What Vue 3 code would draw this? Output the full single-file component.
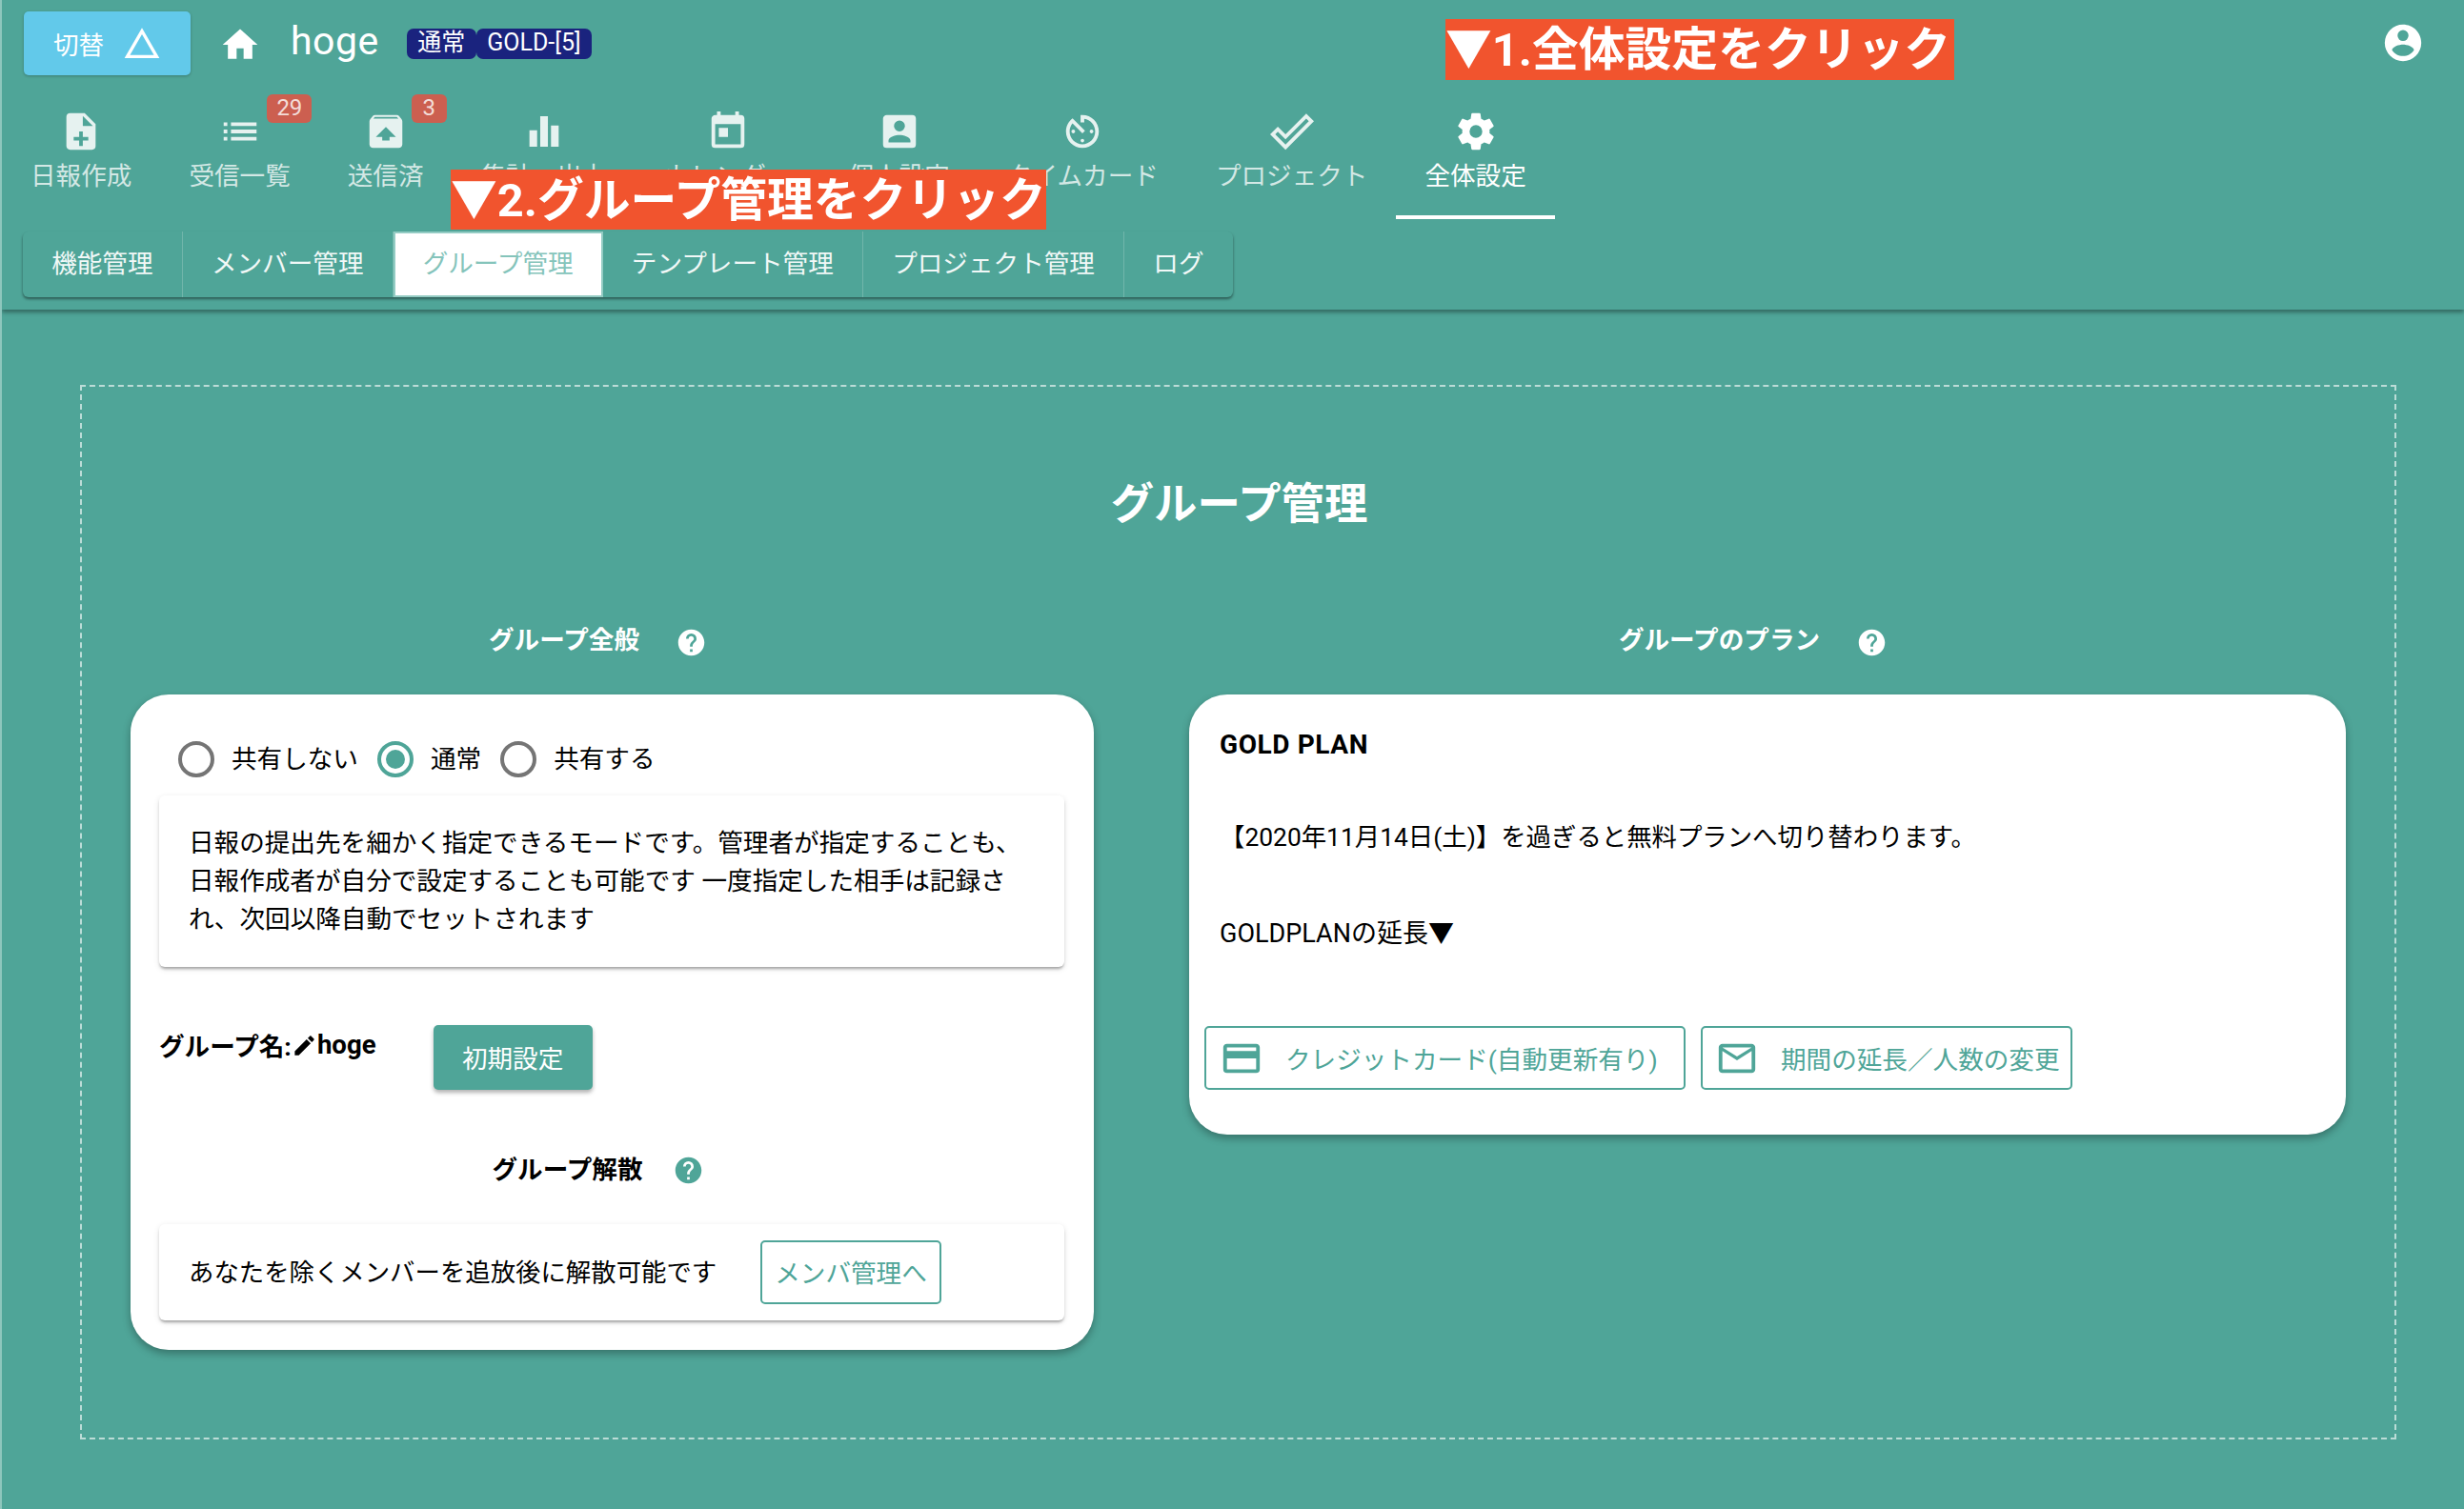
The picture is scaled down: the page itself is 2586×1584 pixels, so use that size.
<template>
  <div class="page">
    <header class="top">
      <div class="brand-row">
        <button class="switch-btn">
          切替
          <svg class="switch-icon" viewBox="0 0 24 24"><path :d="icons.triangle" /></svg>
        </button>
        <svg class="home-icon" viewBox="0 0 24 24"><path :d="icons.home" /></svg>
        <span class="site-name">hoge</span>
        <span class="chip">通常</span>
        <span class="chip">GOLD-[5]</span>
        <svg class="account-icon" viewBox="0 0 24 24"><path :d="icons.account" /></svg>
      </div>

      <nav class="nav">
        <a v-for="item in navItems" :key="item.label" class="nav-item" :class="{ active: item.active }">
          <svg class="nav-icon" viewBox="0 0 24 24"><path :d="item.icon" fill-rule="evenodd" /></svg>
          <span>{{ item.label }}</span>
          <span v-if="item.count" class="count" :class="item.countClass">{{ item.count }}</span>
        </a>
      </nav>

      <div class="subbar">
        <a v-for="tab in subTabs" :key="tab" class="subtab" :class="{ active: tab === 'グループ管理' }">{{ tab }}</a>
      </div>

      <div class="note note-one">▼1.全体設定をクリック</div>
      <div class="note note-two">▼2.グループ管理をクリック</div>
    </header>

    <main class="dashed">
      <h1 class="title">グループ管理</h1>

      <div class="columns">
        <section>
          <div class="heading">
            <span>グループ全般</span>
            <svg class="help" viewBox="0 0 24 24"><path :d="icons.help" /></svg>
          </div>
          <div class="card left-card">
            <div class="radios">
              <label v-for="r in radios" :key="r" class="radio">
                <span class="radio-mark" :class="{ on: r === '通常' }"></span>
                <span class="radio-text">{{ r }}</span>
              </label>
            </div>
            <div class="sheet desc">
              日報の提出先を細かく指定できるモードです。管理者が指定することも、日報作成者が自分で設定することも可能です 一度指定した相手は記録され、次回以降自動でセットされます
            </div>
            <div class="name-row">
              <div class="group-name">
                グループ名:<svg class="pencil" viewBox="0 0 24 24"><path :d="icons.pencil" /></svg><span class="name-value">hoge</span>
              </div>
              <button class="init-btn">初期設定</button>
            </div>
            <div class="heading dark">
              <span>グループ解散</span>
              <svg class="help" viewBox="0 0 24 24"><path :d="icons.help" /></svg>
            </div>
            <div class="sheet dissolve">
              <span class="dissolve-text">あなたを除くメンバーを追放後に解散可能です</span>
              <button class="outline-btn member-btn">メンバ管理へ</button>
            </div>
          </div>
        </section>

        <section>
          <div class="heading">
            <span>グループのプラン</span>
            <svg class="help" viewBox="0 0 24 24"><path :d="icons.help" /></svg>
          </div>
          <div class="card right-card">
            <p class="plan-name">GOLD PLAN</p>
            <p class="plan-limit">【2020年11月14日(土)】を過ぎると無料プランへ切り替わります。</p>
            <p class="plan-extend">GOLDPLANの延長▼</p>
            <div class="plan-buttons">
              <button class="outline-btn plan-btn card-btn">
                <svg class="btn-icon" viewBox="0 0 24 24"><path :d="icons.card" /></svg>
                クレジットカード(自動更新有り)
              </button>
              <button class="outline-btn plan-btn mail-btn">
                <svg class="btn-icon" viewBox="0 0 24 24"><path :d="icons.mail" /></svg>
                期間の延長／人数の変更
              </button>
            </div>
          </div>
        </section>
      </div>
    </main>
  </div>
</template>

<script setup>
const icons = {
  triangle: "M12,2L1,21H23M12,6L19.53,19H4.47",
  home: "M10,20V14H14V20H19V12H22L12,3L2,12H5V20H10Z",
  account:
    "M12,19.2C9.5,19.2 7.29,17.92 6,16C6.03,14 10,12.9 12,12.9C14,12.9 17.97,14 18,16C16.71,17.92 14.5,19.2 12,19.2M12,5A3,3 0 0,1 15,8A3,3 0 0,1 12,11A3,3 0 0,1 9,8A3,3 0 0,1 12,5M12,2A10,10 0 0,0 2,12A10,10 0 0,0 12,22A10,10 0 0,0 22,12C22,6.47 17.5,2 12,2Z",
  help: "M15.07,11.25L14.17,12.17C13.45,12.89 13,13.5 13,15H11V14.5C11,13.39 11.45,12.39 12.17,11.67L13.41,10.41C13.78,10.05 14,9.55 14,9C14,7.89 13.1,7 12,7A2,2 0 0,0 10,9H8A4,4 0 0,1 12,5A4,4 0 0,1 16,9C16,9.88 15.64,10.67 15.07,11.25M13,19H11V17H13M12,2A10,10 0 0,0 2,12A10,10 0 0,0 12,22A10,10 0 0,0 22,12C22,6.47 17.5,2 12,2Z",
  pencil:
    "M20.71,7.04C21.1,6.65 21.1,6 20.71,5.63L18.37,3.29C18,2.9 17.35,2.9 16.96,3.29L15.12,5.12L18.87,8.87M3,17.25V21H6.75L17.81,9.93L14.06,6.18L3,17.25Z",
  card: "M20,8H4V6H20M20,18H4V12H20M20,4H4C2.89,4 2,4.89 2,6V18A2,2 0 0,0 4,20H20A2,2 0 0,0 22,18V6C22,4.89 21.1,4 20,4Z",
  mail: "M22 6C22 4.9 21.1 4 20 4H4C2.9 4 2 4.9 2 6V18C2 19.1 2.9 20 4 20H20C21.1 20 22 19.1 22 18V6M20 6L12 11L4 6H20M20 18H4V8L12 13L20 8V18Z",
};

const navItems = [
  {
    label: "日報作成",
    icon: "M13,9H18.5L13,3.5V9M6,2H14L20,8V20A2,2 0 0,1 18,22H6C4.89,22 4,21.1 4,20V4C4,2.89 4.89,2 6,2M11,15H8V17H11V20H13V17H16V15H13V12H11V15Z",
  },
  {
    label: "受信一覧",
    icon: "M3 13h2v-2H3v2zm0 4h2v-2H3v2zm0-8h2V7H3v2zm4 4h14v-2H7v2zm0 4h14v-2H7v2zM7 7v2h14V7H7z",
    count: 29,
    countClass: "count-wide",
  },
  {
    label: "送信済",
    icon: "M20.55 5.22l-1.39-1.68C18.88 3.21 18.47 3 18 3H6c-.47 0-.88.21-1.15.55L3.46 5.22C3.17 5.57 3 6.01 3 6.5V19c0 1.1.89 2 2 2h14c1.1 0 2-.9 2-2V6.5c0-.49-.17-.93-.45-1.28zM12 9.5l5.5 5.5H14v2h-4v-2H6.5L12 9.5zM5.12 5l.82-1h12l.93 1H5.12z",
    count: 3,
    countClass: "count-narrow",
  },
  { label: "集計・出力", icon: "M4 20.3V11.4h4.2v8.9zM9.9 20.3V3.6h4.2v16.7zM15.8 20.3V8.8H20v11.5z" },
  {
    label: "カレンダー",
    icon: "M7,10H12V15H7M19,19H5V8H19M19,3H18V1H16V3H8V1H6V3H5C3.89,3 3,3.9 3,5V19A2,2 0 0,0 5,21H19A2,2 0 0,0 21,19V5A2,2 0 0,0 19,3Z",
  },
  {
    label: "個人設定",
    icon: "M6,17C6,15 10,14 12,14C14,14 18,15 18,17V18H6M15,9A3,3 0 0,1 12,12A3,3 0 0,1 9,9A3,3 0 0,1 12,6A3,3 0 0,1 15,9M3,5V19A2,2 0 0,0 5,21H19A2,2 0 0,0 21,19V5A2,2 0 0,0 19,3H5C3.89,3 3,3.9 3,5Z",
  },
  {
    label: "タイムカード",
    icon: "M11 17c0 .55.45 1 1 1s1-.45 1-1-.45-1-1-1-1 .45-1 1zm0-14v4h2V5.08c3.39.49 6 3.39 6 6.92 0 3.87-3.13 7-7 7s-7-3.13-7-7c0-1.68.59-3.22 1.58-4.42L12 13l1.41-1.41-6.8-6.8v.02C4.42 6.45 3 9.05 3 12c0 4.97 4.02 9 9 9 4.97 0 9-4.03 9-9s-4.03-9-9-9h-1zm7 9c0-.55-.45-1-1-1s-1 .45-1 1 .45 1 1 1 1-.45 1-1zM6 12c0 .55.45 1 1 1s1-.45 1-1-.45-1-1-1-1 .45-1 1z",
  },
  {
    label: "プロジェクト",
    icon: "M19.78,2.2L24,6.42L8.44,22L0,13.55L4.22,9.33L8.44,13.55L19.78,2.2M19.78,5L8.44,16.36L4.22,12.19L2.81,13.55L8.44,19.17L21.19,6.42L19.78,5Z",
  },
  {
    label: "全体設定",
    active: true,
    icon: "M12,15.5A3.5,3.5 0 0,1 8.5,12A3.5,3.5 0 0,1 12,8.5A3.5,3.5 0 0,1 15.5,12A3.5,3.5 0 0,1 12,15.5M19.43,12.97C19.47,12.65 19.5,12.33 19.5,12C19.5,11.67 19.47,11.34 19.43,11L21.54,9.37C21.73,9.22 21.78,8.95 21.66,8.73L19.66,5.27C19.54,5.05 19.27,4.96 19.05,5.05L16.56,6.05C16.04,5.66 15.5,5.32 14.87,5.07L14.5,2.42C14.46,2.18 14.25,2 14,2H10C9.75,2 9.54,2.18 9.5,2.42L9.13,5.07C8.5,5.32 7.96,5.66 7.44,6.05L4.95,5.05C4.73,4.96 4.46,5.05 4.34,5.27L2.34,8.73C2.21,8.95 2.27,9.22 2.46,9.37L4.57,11C4.53,11.34 4.5,11.67 4.5,12C4.5,12.33 4.53,12.65 4.57,12.97L2.46,14.63C2.27,14.78 2.21,15.05 2.34,15.27L4.34,18.73C4.46,18.95 4.73,19.03 4.95,18.95L7.44,17.94C7.96,18.34 8.5,18.68 9.13,18.93L9.5,21.58C9.54,21.82 9.75,22 10,22H14C14.25,22 14.46,21.82 14.5,21.58L14.87,18.93C15.5,18.67 16.04,18.34 16.56,17.94L19.05,18.95C19.27,19.03 19.54,18.95 19.66,18.73L21.66,15.27C21.78,15.05 21.73,14.78 21.54,14.63L19.43,12.97Z",
  },
];

const subTabs = ["機能管理", "メンバー管理", "グループ管理", "テンプレート管理", "プロジェクト管理", "ログ"];
const radios = ["共有しない", "通常", "共有する"];
</script>

<style>
body {
  background: #4fa598;
}
</style>

<style scoped>
.page {
  width: 2586px;
  height: 1584px;
  overflow: hidden;
  background: #4fa598;
  color: #000;
  font-family: Roboto, "Noto Sans CJK JP", sans-serif;
  font-size: 26.6px;
  box-sizing: border-box;
  border-left: 2px solid #8ec6bd;
}

button {
  font-family: inherit;
  font-size: inherit;
  cursor: pointer;
}

svg {
  fill: currentColor;
  display: block;
  flex: none;
}

.top {
  position: relative;
  height: 325px;
  box-sizing: border-box;
  padding-top: 12px;
  box-shadow: 0 3px 4px rgba(0, 0, 0, 0.35);
}

.brand-row {
  display: flex;
  align-items: center;
  height: 67px;
  padding-left: 23px;
  color: #fff;
}

.switch-btn {
  width: 175px;
  height: 67px;
  display: flex;
  align-items: center;
  gap: 20px;
  padding: 0 0 0 31px;
  background: #62c9ea;
  color: #fff;
  border: none;
  border-radius: 5px;
  box-shadow: 0 1px 3px rgba(0, 0, 0, 0.25);
}

.switch-icon {
  width: 40px;
  height: 40px;
}

.home-icon {
  width: 44px;
  height: 44px;
  margin-left: 30px;
  margin-top: 2px;
}

.site-name {
  font-size: 41px;
  margin-left: 31px;
  margin-top: -6px;
  letter-spacing: 0.5px;
}

.chip {
  height: 32px;
  line-height: 30px;
  padding: 0 11.5px;
  font-size: 25px;
  background: #1a237e;
  border-radius: 7px;
}

.site-name + .chip {
  margin-left: 29px;
}

.account-icon {
  width: 46px;
  height: 46px;
  margin-left: auto;
  margin-right: 41px;
  margin-top: -2px;
}

.nav {
  display: flex;
  height: 130px;
  margin-top: 21px;
}

.nav-item {
  position: relative;
  display: flex;
  flex-direction: column;
  align-items: center;
  box-sizing: border-box;
  height: 130px;
  padding: 15px 30px 0;
  color: rgba(255, 255, 255, 0.75);
  line-height: 40px;
  white-space: nowrap;
}

.nav-item.active {
  color: #fff;
  border-bottom: 4px solid #fff;
}

.nav-icon {
  width: 46px;
  height: 46px;
  margin-bottom: 4px;
  color: #e6f2f0;
}

.active .nav-icon {
  color: #fff;
}

.count {
  position: absolute;
  top: -1px;
  height: 30px;
  line-height: 29px;
  text-align: center;
  font-size: 24px;
  background: #cc5f50;
  border-radius: 6px;
  color: rgba(255, 255, 255, 0.8);
}

.count-wide {
  left: 112px;
  width: 47px;
}

.count-narrow {
  left: 97px;
  width: 37px;
}

.subbar {
  display: inline-flex;
  margin: 13px 0 0 22px;
  height: 69px;
  border-radius: 6px;
  box-shadow: 0 2px 3px rgba(0, 0, 0, 0.45);
  color: #f1f8f7;
}

.subtab {
  display: flex;
  align-items: center;
  padding: 0 30.2px 6px;
  border-right: 1px solid #71b6ab;
  white-space: nowrap;
}

.subtab:last-child {
  border-right: none;
}

.subtab.active {
  background: #fff;
  color: #85c4bb;
  border: 2px solid #94ccc4;
  padding: 0 29px 6px;
}

.note {
  position: absolute;
  background: #f1542e;
  color: #fff;
  font-weight: 700;
  font-size: 48.8px;
  line-height: 66px;
  white-space: nowrap;
  box-sizing: border-box;
}

.note-one {
  top: 20px;
  left: 1515px;
  width: 534px;
  height: 64px;
}

.note-two {
  top: 178px;
  left: 471px;
  width: 625px;
  height: 63px;
}

.dashed {
  margin: 79px 0 0 82px;
  width: 2431px;
  height: 1107px;
  box-sizing: border-box;
  border: 2px dashed #bcdcd7;
  padding: 0 51px;
}

.title {
  margin: 94px 0 88px;
  color: #fff;
  font-size: 45.4px;
  font-weight: 700;
  line-height: 60px;
  text-align: center;
  transform: translateX(1px);
}

.columns {
  display: grid;
  grid-template-columns: 1011px 1214px;
  gap: 100px;
}

.heading {
  display: flex;
  align-items: center;
  justify-content: center;
  gap: 38px;
  height: 50px;
  padding-right: 30px;
  margin-bottom: 31px;
  color: #fff;
  font-weight: 700;
}

.heading > span {
  margin-bottom: 7px;
}

.help {
  width: 33px;
  height: 33px;
  margin-top: 2px;
}

.heading.dark {
  color: #000;
  margin: 56px 0 35px;
  gap: 32px;
  padding-right: 28px;
}

.heading.dark > span {
  margin-bottom: 0;
}

.heading.dark .help {
  color: #4fa598;
  margin-top: 6px;
}

.card {
  background: #fff;
  border-radius: 40px;
  box-shadow: 0 4px 8px rgba(0, 0, 0, 0.3);
}

.left-card {
  height: 688px;
  box-sizing: border-box;
  padding: 49px 31px 0 30px;
}

.radios {
  display: flex;
  height: 38px;
  padding-left: 20px;
  gap: 20px;
}

.radio {
  display: flex;
  align-items: center;
  gap: 18px;
  white-space: nowrap;
}

.radio-text {
  margin-bottom: 5px;
}

.radio-mark {
  width: 38px;
  height: 38px;
  box-sizing: border-box;
  border: 4px solid #757575;
  border-radius: 50%;
  display: flex;
  align-items: center;
  justify-content: center;
}

.radio-mark.on {
  border-color: #4fa598;
}

.radio-mark.on::after {
  content: "";
  width: 20px;
  height: 20px;
  border-radius: 50%;
  background: #4fa598;
}

.sheet {
  background: #fff;
  border-radius: 6px;
  box-shadow: 0 3px 3px -1px rgba(0, 0, 0, 0.3), 0 2px 6px rgba(0, 0, 0, 0.12);
}

.desc {
  margin-top: 19px;
  padding: 30px 31px;
  line-height: 40px;
}

.name-row {
  display: flex;
  margin-top: 61px;
}

.group-name {
  display: flex;
  align-items: center;
  height: 40px;
  font-weight: 700;
  white-space: nowrap;
}

.pencil {
  width: 27px;
  height: 27px;
  margin-top: 3px;
}

.name-value {
  font-size: 27.6px;
}

.init-btn {
  width: 167px;
  height: 68px;
  margin-left: 60px;
  padding: 0 0 2px;
  background: #4fa598;
  color: #fff;
  border: none;
  border-radius: 5px;
  box-shadow: 0 3px 4px rgba(0, 0, 0, 0.3);
}

.dissolve {
  display: flex;
  align-items: center;
  justify-content: space-between;
  height: 101px;
  padding: 0 129px 0 31px;
}

.dissolve-text {
  margin-bottom: 5px;
  font-size: 26.4px;
}

.outline-btn {
  display: flex;
  align-items: center;
  background: #fff;
  color: #4fa598;
  border: 2px solid #4fa598;
  border-radius: 5px;
  box-sizing: border-box;
  white-space: nowrap;
}

.member-btn {
  height: 67px;
  width: 190px;
  justify-content: center;
  padding: 0 0 3px;
}

.right-card {
  height: 462px;
  box-sizing: border-box;
  padding: 33px 16px 0;
}

.right-card p {
  margin: 0;
  padding-left: 16px;
  line-height: 40px;
}

.plan-name {
  font-weight: 700;
  font-size: 28px;
  letter-spacing: 0.6px;
}

.right-card .plan-limit {
  margin-top: 57px;
  font-size: 26.4px;
}

.right-card .plan-extend {
  margin-top: 61px;
  font-size: 27px;
}

.plan-buttons {
  display: flex;
  gap: 16px;
  margin-top: 77px;
}

.plan-btn {
  height: 67px;
}

.card-btn {
  width: 505px;
  padding-left: 14px;
  gap: 23px;
}

.mail-btn {
  width: 390px;
  padding-left: 13px;
  gap: 23px;
}

.btn-icon {
  width: 46px;
  height: 46px;
}
</style>
